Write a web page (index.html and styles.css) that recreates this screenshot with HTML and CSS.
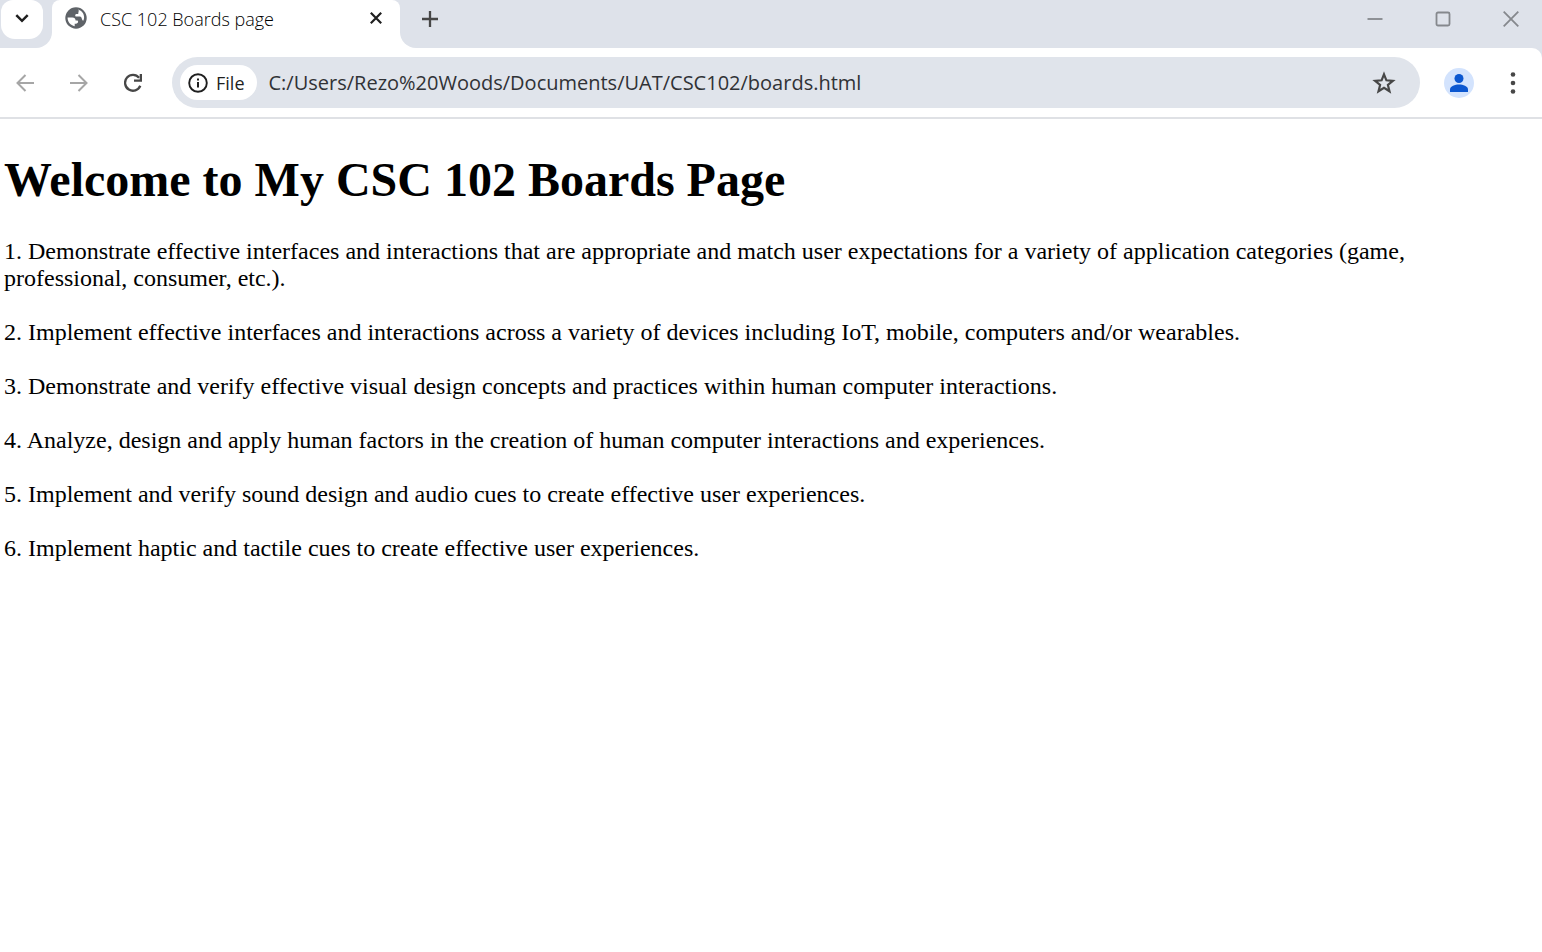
FILE: index.html
```html
<!DOCTYPE html>
<html lang="en">
<head>
<meta charset="utf-8">
<title>CSC 102 Boards page</title>
<link rel="stylesheet" href="styles.css">
</head>
<body>
<header class="browser">
  <div class="strip">
    <div class="strip-start">
      <button class="tab-search" aria-label="Search tabs">
        <svg width="14" height="10" viewBox="0 0 14 10"><path d="M1.300 2.200L7 7.800l5.700-5.600" fill="none" stroke="#1f1f1f" stroke-width="2.500"/></svg>
      </button>
    </div>
    <div class="tab">
      <svg width="22" height="22" viewBox="0 0 22 22"><circle cx="11" cy="11" r="10.7" fill="#5f6368"/><path d="M12.8 2.5c3.6.7 6.3 4 6.3 7.8 0 1.3-.2 2.4-.8 3.5-.7-.3-1.2-.8-1.3-1.5l-.6-1.7c-.3-.7-.9-1-1.7-1h-3.4c-.8 0-1.100-.5-1.100-1.200 0-1 .5-1.500 1.500-1.500h.7c.7 0 1-.4 1-1V5c0-.7.3-1 .9-1.100-.7-.4-1.200-.8-1.500-1.400zM2.600 10.600h4.800c1.900 0 3.200 1.200 3.200 2.800h1.300c.8 0 1.200.5 1.200 1.200 0 1.300-.9 2.100-2.200 2.100H9.700v2.500c-4.100-.6-7.300-4.200-7.100-8.600z" fill="#fff"/></svg>
      <span class="tab-title">CSC 102 Boards page</span>
      <button class="icon-button" aria-label="Close tab">
        <svg width="12" height="12" viewBox="0 0 12 12"><path d="M.8.8l10.400 10.400M11.200.8L.8 11.200" stroke="#1f1f1f" stroke-width="2.200"/></svg>
      </button>
    </div>
    <div class="strip-end">
      <button class="icon-button" aria-label="New tab">
        <svg width="16" height="16" viewBox="0 0 16 16"><path d="M8 0v16M0 8h16" stroke="#474747" stroke-width="2.300"/></svg>
      </button>
      <div class="window-controls">
        <button class="icon-button" aria-label="Minimize"><svg width="16" height="16" viewBox="0 0 16 16"><path d="M.5 8h15" stroke="#85888d" stroke-width="1.800"/></svg></button>
        <button class="icon-button" aria-label="Maximize"><svg width="16" height="16" viewBox="0 0 16 16"><rect x="1.500" y="1.500" width="13" height="13" rx="1.500" fill="none" stroke="#85888d" stroke-width="1.800"/></svg></button>
        <button class="icon-button" aria-label="Close"><svg width="16" height="16" viewBox="0 0 16 16"><path d="M.7.7l14.600 14.600M15.300.7L.7 15.300" stroke="#85888d" stroke-width="1.800"/></svg></button>
      </div>
    </div>
  </div>
  <div class="toolbar">
    <nav class="history" aria-label="History">
      <button class="icon-button" aria-label="Back"><svg width="18" height="18" viewBox="0 0 18 18"><path d="M18 9H1.500M9.500 1L1.500 9l8 8" fill="none" stroke="#a6a6a6" stroke-width="2"/></svg></button>
      <button class="icon-button" aria-label="Forward"><svg width="18" height="18" viewBox="0 0 18 18"><path d="M0 9h16.500M8.500 1l8 8-8 8" fill="none" stroke="#a6a6a6" stroke-width="2"/></svg></button>
      <button class="icon-button" aria-label="Reload"><svg width="18" height="20" viewBox="0 0 18 20"><path d="M16.300 12.800A7.900 7.900 0 1 1 15.100 4.800" fill="none" stroke="#474747" stroke-width="2.300"/><path d="M18 1v7.700h-8V6.400h5.700V1z" fill="#474747"/></svg></button>
    </nav>
    <div class="address">
      <button class="chip">
        <svg width="20" height="20" viewBox="0 0 20 20"><circle cx="10" cy="10" r="8.800" fill="none" stroke="#1f1f1f" stroke-width="1.900"/><path d="M10 9v5.500M10 5.500v2" stroke="#1f1f1f" stroke-width="2"/></svg>
        <span>File</span>
      </button>
      <input class="url" type="text" aria-label="Address" value="C:/Users/Rezo%20Woods/Documents/UAT/CSC102/boards.html">
      <button class="icon-button" aria-label="Bookmark this page"><svg width="24" height="24" viewBox="0 0 24 24"><path d="M12 3.300l2.400 6 6.500.5-5 4.200 1.600 6.300-5.500-3.400-5.500 3.400L8.100 14l-5-4.200 6.500-.5z" fill="none" stroke="#474747" stroke-width="2.200"/></svg></button>
    </div>
    <button class="avatar" aria-label="Profile"><svg width="18" height="18" viewBox="0 0 18 18"><circle cx="9" cy="4.500" r="4.500" fill="#0b57d0"/><path d="M0 18v-2.500C0 12 5 10.500 9 10.500s9 1.500 9 5V18z" fill="#0b57d0"/></svg></button>
    <button class="icon-button" aria-label="Menu"><svg width="6" height="22" viewBox="0 0 6 22"><g fill="#474747"><circle cx="3" cy="2.500" r="2.300"/><circle cx="3" cy="11" r="2.300"/><circle cx="3" cy="19.500" r="2.300"/></g></svg></button>
  </div>
</header>
<main class="page">
  <h1>Welcome to My CSC 102 Boards Page</h1>
  <p>1. Demonstrate effective interfaces and interactions that are appropriate and match user expectations for a variety of application categories (game, professional, consumer, etc.).</p>
  <p>2. Implement effective interfaces and interactions across a variety of devices including IoT, mobile, computers and/or wearables.</p>
  <p>3. Demonstrate and verify effective visual design concepts and practices within human computer interactions.</p>
  <p>4. Analyze, design and apply human factors in the creation of human computer interactions and experiences.</p>
  <p>5. Implement and verify sound design and audio cues to create effective user experiences.</p>
  <p>6. Implement haptic and tactile cues to create effective user experiences.</p>
</main>
</body>
</html>
```
FILE: styles.css
```css
* { box-sizing: border-box; }
body {
  margin: 0;
  background: #fff;
  color: #000;
  font-family: "Liberation Serif", "Times New Roman", serif;
}
button, input {
  border: 0;
  padding: 0;
  background: none;
  color: inherit;
  font: inherit;
}
svg { display: block; flex: none; }
.browser {
  background: #dee2ea;
  color: #1f1f1f;
  font-family: "Open Sans", "Noto Sans", sans-serif;
  font-size: 20px;
}
.strip {
  display: flex;
  height: 48px;
  background: linear-gradient(#dee2ea 50%, #fff 50%);
}
.strip-start {
  width: 52px;
  padding-left: 1px;
  background: #dee2ea;
  border-bottom-right-radius: 16px;
}
.tab-search {
  display: flex;
  align-items: center;
  justify-content: center;
  width: 42px;
  height: 39px;
  padding-bottom: 3px;
  background: #fff;
  border-radius: 12px 12px 14px 14px;
}
.icon-button {
  display: flex;
  align-items: center;
  justify-content: center;
}
.tab {
  display: flex;
  align-items: center;
  width: 348px;
  padding: 0 18px 12px 13px;
  background: #fff;
  border-radius: 8px 8px 0 0;
}
.tab-title {
  flex: 1;
  margin-left: 13px;
  padding-top: 2px;
  color: #000;
  font-weight: 300;
  font-size: 18px;
  line-height: 24px;
}
.strip-end {
  display: flex;
  flex: 1;
  align-items: center;
  justify-content: space-between;
  padding: 0 23px 11px 22px;
  background: #dee2ea;
  border-bottom-left-radius: 16px;
}
.window-controls { display: flex; gap: 52px; }
.toolbar {
  display: flex;
  align-items: center;
  height: 71px;
  padding: 0 26px 0 16px;
  background: #fff;
  border-bottom: 2px solid #dfe1e5;
  border-top-right-radius: 10px;
}
.history {
  display: flex;
  align-items: center;
  gap: 36px;
}
.address {
  display: flex;
  flex: 1;
  align-items: center;
  height: 51px;
  margin-left: 30px;
  padding: 0 24px 0 8px;
  background: #e0e4eb;
  border-radius: 26px;
}
.chip {
  display: flex;
  align-items: center;
  gap: 8px;
  height: 35px;
  padding: 0 12px 0 8px;
  background: #fff;
  border-radius: 18px;
  font-size: 18px;
  font-weight: 500;
}
.url {
  flex: 1;
  min-width: 0;
  margin-left: 12px;
  color: #303236;
}
.avatar {
  display: flex;
  align-items: center;
  justify-content: center;
  width: 30px;
  height: 30px;
  margin: 0 36px 0 24px;
  background: #d3e3fd;
  border-radius: 50%;
}
.page {
  padding: 32px 8px 32px 4px;
  font-size: 24px;
  line-height: 27px;
}
h1 {
  margin: 0 0 30px;
  font-size: 48px;
  line-height: 57px;
}
p { margin: 0 0 27px; }
```
